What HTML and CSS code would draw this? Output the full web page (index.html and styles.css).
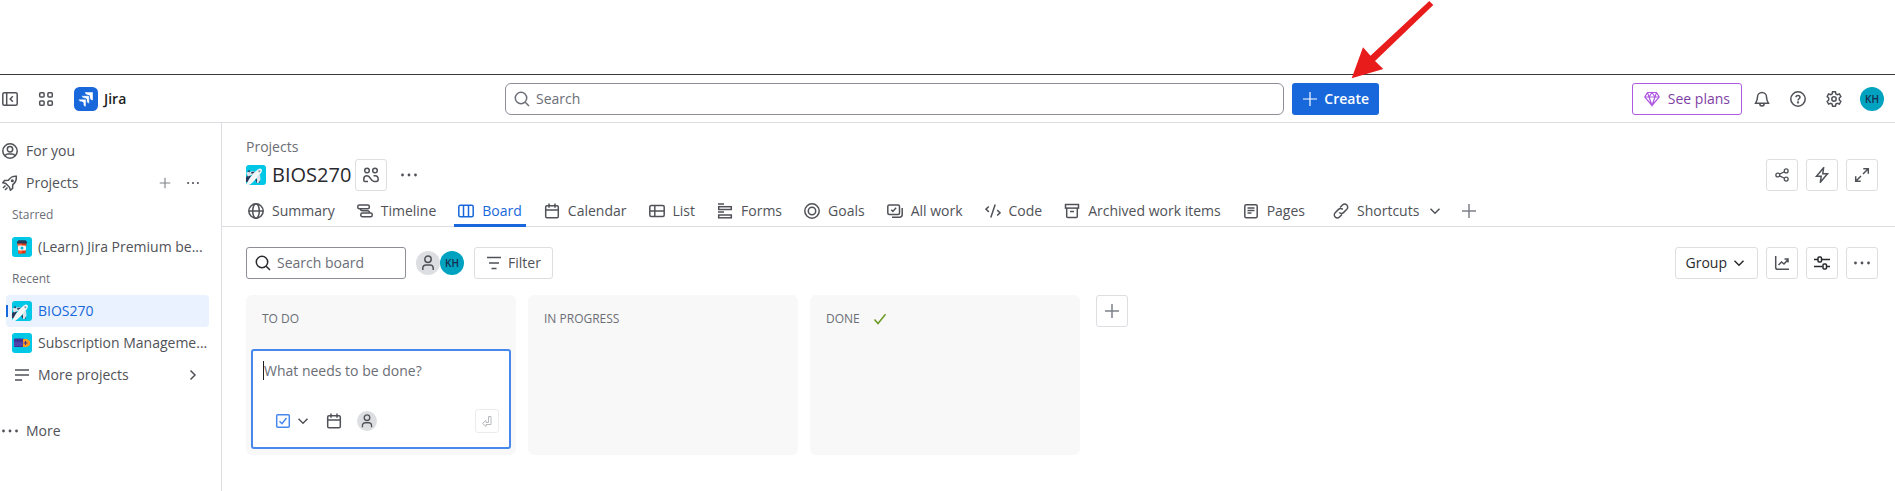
FILE: index.html
```html
<!DOCTYPE html>
<html lang="en">
<head>
<meta charset="utf-8">
<title>BIOS270 - Board - Jira</title>
<link rel="stylesheet" href="styles.css">
</head>
<body>
<svg class="sprite" aria-hidden="true">
  <symbol id="i-plus" viewBox="0 0 16 16"><path d="M8 1v14M1 8h14"/></symbol>
  <symbol id="i-dots" viewBox="0 0 16 16"><g fill="currentColor" stroke="none"><circle cx="1.5" cy="8" r="1.4"/><circle cx="8" cy="8" r="1.4"/><circle cx="14.5" cy="8" r="1.4"/></g></symbol>
  <symbol id="i-search" viewBox="0 0 16 16"><circle cx="7" cy="7" r="5.7"/><path d="M11.2 11.2L15 15"/></symbol>
  <symbol id="i-down" viewBox="0 0 16 16"><path d="M3.5 5.8L8 10.3l4.500-4.500"/></symbol>
  <symbol id="i-right" viewBox="0 0 16 16"><path d="M5.500 3.500L10 8l-4.500 4.500"/></symbol>
  <symbol id="i-person" viewBox="0 0 16 16"><circle cx="8" cy="4.200" r="3.200"/><path d="M2.800 15v-2a3 3 0 0 1 3-3h4.400a3 3 0 0 1 3 3v2"/></symbol>
  <symbol id="i-calendar" viewBox="0 0 16 16"><rect x="1.700" y="2.700" width="12.600" height="12.100" rx="1.300"/><path d="M1.700 7h12.600M5 .5v4.200M11 .5v4.200"/></symbol>
  <symbol id="i-lines" viewBox="0 0 16 16"><path d="M1 3h14M1 8h14M1 13h7"/></symbol>
  <symbol id="i-plane" viewBox="0 0 20 20">
    <rect width="20" height="20" rx="3" fill="#00c7e6" stroke="none"/>
    <g stroke="none"><path fill="#253858" d="M0 12l3-2 2 1-3 6H0zM9 14.500l4-.5 1 3.500-3 .5z"/><path fill="#dfe1e6" d="M0 7.500l8-1.500 1 2.500-7 3zM11 12.500l3-3 .5 5-2 3.500h-1.500z"/><path fill="#f4f5f7" d="M.5 20c.5-4 9-15.500 13.500-16.500 2.500 0 2.500 3 .5 5C11.500 12.500 7 17.500 3 20z"/><path fill="#8993a4" d="M12.500 5.200l2 .3-.5 2-1.800-1z"/><path fill="#253858" d="M1.500 6l2.500-1-.5 2.500zM5 7.300l3-.8.300 1-2.500 1.500z"/></g>
  </symbol>
</svg>

<header class="topbar">
  <div class="topbar-start">
    <button class="icon-button" aria-label="Collapse sidebar"><svg class="icon" viewBox="0 0 16 16"><rect x=".8" y="1.800" width="14.400" height="12.400" rx="1.500"/><path d="M4.700 2v12M10.800 5.300L8.200 8l2.600 2.700"/></svg></button>
    <button class="icon-button" aria-label="App switcher"><svg class="icon" viewBox="0 0 16 16"><rect x="1.700" y="1.700" width="4.400" height="4.400" rx="1"/><rect x="9.900" y="1.700" width="4.400" height="4.400" rx="1"/><rect x="1.700" y="9.900" width="4.400" height="4.400" rx="1"/><rect x="9.900" y="9.900" width="4.400" height="4.400" rx="1"/></svg></button>
    <a class="brand" href="#"><svg class="logo" viewBox="0 0 24 24"><rect width="24" height="24" rx="5.500" fill="#1868db"/><g fill="#fff"><path d="M10.800 5.200h8v8c-1.700 0-2.800-1.200-2.800-2.800V8.900l-1.300-.9c-2 0-3.400-1-3.900-2.800z"/><path d="M7.600 8.700h7.700v7.700c-1.600 0-2.700-1.200-2.700-2.700v-1.600l-1.400-.8c-2 0-3.200-1-3.600-2.600z" stroke="#1868db" stroke-width=".5"/><path d="M4.400 12.200h7.600v7.600c-1.600 0-2.700-1.200-2.700-2.700v-1.500L8 14.800c-2 0-3.200-1-3.600-2.600z" stroke="#1868db" stroke-width=".5"/></g></svg>Jira</a>
  </div>
  <div class="topbar-center">
    <label class="search search-global"><svg class="icon"><use href="#i-search"/></svg><input type="search" placeholder="Search" aria-label="Search"></label>
    <div class="create-wrap">
      <button class="create"><svg class="icon"><use href="#i-plus"/></svg>Create</button>
      <svg class="pointer" viewBox="0 0 84 79" aria-hidden="true"><path fill="#e91c1c" d="M.7 78.300L12 47.300l7.500 8.500L78.300 1l4 4-58.300 56 8.300 8z"/></svg>
    </div>
  </div>
  <div class="topbar-end">
    <button class="plans"><svg class="icon" viewBox="0 0 16 16"><path d="M3.500 1.500h9L15.300 6 8 14.500.7 6zM.7 6h14.600M5 6l3 8.500L11 6M3.500 1.500L5 6l3-4.500L11 6l1.500-4.500"/></svg>See plans</button>
    <button class="icon-button" aria-label="Notifications"><svg class="icon" viewBox="0 0 16 16"><path d="M3.500 6a4.500 4.500 0 0 1 9 0c0 3 .6 4 1.900 6.200H1.600C2.900 10 3.500 9 3.500 6zM5.800 12.500c0 3.400 4.400 3.400 4.400 0"/></svg></button>
    <button class="icon-button" aria-label="Help"><svg class="icon" viewBox="0 0 16 16"><circle cx="8" cy="8" r="7.200"/><path d="M6 6.300c0-2.500 4-2.400 4 0 0 1.400-2 1.500-2 3.100"/><circle cx="8" cy="11.500" r=".4" fill="currentColor"/></svg></button>
    <button class="icon-button" aria-label="Settings"><svg class="icon" viewBox="0 0 16 16"><path d="M6.600.8h2.800l.5 2.100 1.400.8 2.100-.7 1.400 2.500L13.300 7v2l1.500 1.500-1.400 2.500-2.100-.7-1.400.8-.5 2.100H6.600l-.5-2.100-1.400-.8-2.100.7-1.400-2.500L2.700 9V7L1.200 5.500 2.600 3l2.100.7 1.400-.8z"/><circle cx="8" cy="8" r="2.200"/></svg></button>
    <button class="avatar" aria-label="Profile">KH</button>
  </div>
</header>

<div class="layout">
  <nav class="sidebar">
    <a class="nav-item" href="#"><svg class="icon" viewBox="0 0 16 16"><circle cx="8" cy="8" r="7.200"/><circle cx="8" cy="6.300" r="2.700"/><path d="M3.200 13c.3-1.500 1.200-2 2.400-2h4.800c1.200 0 2.100.5 2.400 2"/></svg><span class="nav-text">For you</span></a>
    <div class="nav-item">
      <svg class="icon" viewBox="0 0 16 16"><path d="M14.300 1.200c-4-.3-5.500.8-8 4L2.600 5.500.8 7.600l2.900.9 3.800 3.800.9 2.900 2.200-1.900.2-3.600c3.200-2.500 3.900-4.300 3.500-8.500zM3.500 10.500L1 13M5.500 12.500L3 15"/><circle cx="10.300" cy="5.700" r=".8"/></svg>
      <a class="nav-text" href="#">Projects</a>
      <span class="nav-actions"><button class="bare" aria-label="Create project"><svg class="icon icon-12 soft"><use href="#i-plus"/></svg></button><button class="bare" aria-label="More actions"><svg class="icon icon-12"><use href="#i-dots"/></svg></button></span>
    </div>
    <h2 class="nav-heading">Starred</h2>
    <a class="nav-item nested" href="#"><svg class="tile" viewBox="0 0 20 20"><rect width="20" height="20" rx="3" fill="#00c7e6"/><path fill="#de350b" d="M5.500 6h9l-1 10.500h-7z"/><path fill="#ff5630" d="M5.500 6h4.500v10.500H6.500z"/><path fill="#253858" d="M6.500 3.200h7L15 5v1.500H5V5z"/><rect x="6" y="8.500" width="8" height="5" rx="1" fill="#f4f5f7"/><circle cx="10" cy="11" r="1.500" fill="#00b8d9"/></svg><span class="nav-text">(Learn) Jira Premium be...</span></a>
    <h2 class="nav-heading">Recent</h2>
    <a class="nav-item nested selected" href="#" aria-current="page"><svg class="tile"><use href="#i-plane"/></svg><span class="nav-text">BIOS270</span></a>
    <a class="nav-item nested" href="#"><svg class="tile" viewBox="0 0 20 20"><rect width="20" height="20" rx="3" fill="#00c7e6"/><rect x="2" y="5.500" width="10" height="8.500" rx="1" fill="#403294"/><path fill="#5243aa" d="M2 9h9v4H2z"/><path fill="#ff991f" d="M11 6h4l3 2v4l-3 2h-4z"/><path d="M13.500 8v4M11.500 10h4" stroke="#403294"/></svg><span class="nav-text">Subscription Manageme...</span></a>
    <a class="nav-item nested" href="#"><svg class="icon inset"><use href="#i-lines"/></svg><span class="nav-text">More projects</span><svg class="icon chevron"><use href="#i-right"/></svg></a>
    <a class="nav-item nav-more" href="#"><svg class="icon"><use href="#i-dots"/></svg><span class="nav-text">More</span></a>
  </nav>

  <main class="main">
    <div class="project-head">
      <a class="crumb" href="#">Projects</a>
      <div class="title-row">
        <svg class="tile"><use href="#i-plane"/></svg>
        <h1 class="title">BIOS270</h1>
        <button class="box" aria-label="Team"><svg class="icon" viewBox="0 0 16 16"><circle cx="4" cy="3.500" r="2.300"/><circle cx="12" cy="3.500" r="2.300"/><path d="M5 14.500H1.800c-.7 0-1-.3-1-1V12c0-2 1.200-3.200 3.200-3.200 4 0 3.200 5.700 7 5.700h2.200c1.400 0 2-.8 2-2.200 0-2.300-1.200-3.500-3.200-3.500h-1.500"/></svg></button>
        <button class="bare dots" aria-label="More actions"><svg class="icon"><use href="#i-dots"/></svg></button>
        <div class="title-actions">
          <button class="box" aria-label="Share"><svg class="icon icon-14" viewBox="0 0 16 16"><circle cx="3.200" cy="8" r="2.200"/><circle cx="12.800" cy="3.300" r="2.200"/><circle cx="12.800" cy="12.700" r="2.200"/><path d="M5.200 7l5.600-2.700M5.200 9l5.600 2.700"/></svg></button>
          <button class="box" aria-label="Automation"><svg class="icon" viewBox="0 0 16 16"><path d="M9.600.8L2.500 9.300H7.200L6.400 15.200l7.100-8.500H8.800z"/></svg></button>
          <button class="box" aria-label="Full screen"><svg class="icon" viewBox="0 0 16 16"><path d="M9.300 1.700h5v5M14 2L9 7M6.700 14.300h-5v-5M2 14l5-5"/></svg></button>
        </div>
      </div>
    </div>

    <nav class="tabs">
      <a class="tab" href="#"><svg class="icon" viewBox="0 0 16 16"><circle cx="8" cy="8" r="7.200"/><ellipse cx="8" cy="8" rx="3.300" ry="7.200"/><path d="M.8 8h14.400"/></svg>Summary</a>
      <a class="tab" href="#"><svg class="icon" viewBox="0 0 16 16"><rect x=".8" y="2" width="11.500" height="3.800" rx="1.500"/><rect x="3.800" y="9.900" width="11.400" height="3.800" rx="1.500"/><path d="M3.500 5.800c0 1.500.5 2 2 2h4.800c1.500 0 2.200.5 2.200 2"/></svg>Timeline</a>
      <a class="tab active" href="#" aria-current="page"><svg class="icon" viewBox="0 0 16 16"><rect x=".8" y="2.300" width="14.400" height="11.400" rx="1.500"/><path d="M5.500 2.300v11.400M10.500 2.300v11.400"/></svg>Board</a>
      <a class="tab" href="#"><svg class="icon"><use href="#i-calendar"/></svg>Calendar</a>
      <a class="tab" href="#"><svg class="icon" viewBox="0 0 16 16"><rect x=".8" y="2.500" width="14.400" height="11" rx="1.500"/><path d="M.8 8h14.400M5.800 2.500v11"/></svg>List</a>
      <a class="tab" href="#"><svg class="icon" viewBox="0 0 16 16"><path d="M1 1h6M1 9h6"/><rect x="1.700" y="3.700" width="12.600" height="2.800"/><rect x="1.700" y="12" width="12.600" height="2.800"/></svg>Forms</a>
      <a class="tab" href="#"><svg class="icon" viewBox="0 0 16 16"><circle cx="8" cy="8" r="7.200"/><circle cx="8" cy="8" r="3.700"/></svg>Goals</a>
      <a class="tab" href="#"><svg class="icon" viewBox="0 0 16 16"><rect x=".8" y="2" width="11.700" height="9.400" rx="1.500"/><path d="M4.200 6.700l1.700 1.700 3.200-3.700M15.200 5v6.500c0 1.700-1 2.700-2.700 2.700H5"/></svg>All work</a>
      <a class="tab" href="#"><svg class="icon" viewBox="0 0 16 16"><path d="M3.800 3.500L1 6.200l2.800 2.700M12.200 7.100L15 9.800l-2.800 2.700M10.200 1.500l-4.400 13"/></svg>Code</a>
      <a class="tab" href="#"><svg class="icon" viewBox="0 0 16 16"><rect x="1.500" y="1.500" width="13" height="3.600"/><path d="M2.700 5.100v8.400c0 .7.300 1 1 1h8.600c.7 0 1-.3 1-1V5.100M6 8.500h4"/></svg>Archived work items</a>
      <a class="tab" href="#"><svg class="icon" viewBox="0 0 16 16"><rect x="1.800" y="1.800" width="12.400" height="12.900" rx="1.500"/><path d="M4.500 5h7M4.500 7.500h7M4.500 10h4"/></svg>Pages</a>
      <button class="tab tab-menu"><svg class="icon" viewBox="0 0 16 16"><path d="M7 4.500l2.500-2.500a3 3 0 0 1 4.300 4.300L10.500 9.600a3 3 0 0 1-4.300 0M9 11.500L6.500 14a3 3 0 0 1-4.300-4.300l3.300-3.300a3 3 0 0 1 4.300 0"/></svg>Shortcuts<svg class="icon"><use href="#i-down"/></svg></button>
      <button class="bare" aria-label="Add tab"><svg class="icon soft"><use href="#i-plus"/></svg></button>
    </nav>

    <div class="toolbar">
      <label class="search search-board"><svg class="icon"><use href="#i-search"/></svg><input type="search" placeholder="Search board" aria-label="Search board"></label>
      <div class="people">
        <button class="avatar unassigned" aria-label="Unassigned"><svg class="icon"><use href="#i-person"/></svg></button>
        <button class="avatar" aria-label="KH">KH</button>
      </div>
      <button class="box wide"><svg class="icon" viewBox="0 0 16 16"><path d="M1 2.500h14M3 8h10M5.500 13.500h5"/></svg>Filter</button>
      <div class="toolbar-end">
        <button class="box wide strong">Group<svg class="icon"><use href="#i-down"/></svg></button>
        <button class="box" aria-label="Insights"><svg class="icon" viewBox="0 0 16 16"><path d="M1.700 1v11.500c0 1.200.6 1.800 1.800 1.800H15M4.500 10l3-3 2.500 2 4-4.500M10.500 4H14v3.500"/></svg></button>
        <button class="box strong" aria-label="View settings"><svg class="icon" viewBox="0 0 16 16"><path d="M0 4.500h4M8 4.500h8M0 11.500h8.500M12.500 11.500H16"/><rect x="4" y="2" width="3.500" height="5" rx="1"/><rect x="9" y="9" width="3.500" height="5" rx="1"/></svg></button>
        <button class="box" aria-label="More actions"><svg class="icon"><use href="#i-dots"/></svg></button>
      </div>
    </div>

    <div class="board">
      <section class="column">
        <h2 class="column-title">TO DO</h2>
        <form class="card">
          <div class="card-field"><span class="caret"></span><textarea rows="1" placeholder="What needs to be done?" aria-label="What needs to be done?"></textarea></div>
          <div class="card-tools">
            <button type="button" class="bare type" aria-label="Work type"><svg class="icon blue" viewBox="0 0 16 16"><rect x="1.700" y="1.700" width="12.600" height="12.600" rx="1"/><path d="M4.500 8.200L7 10.700 11.500 5"/></svg><svg class="icon"><use href="#i-down"/></svg></button>
            <button type="button" class="bare" aria-label="Due date"><svg class="icon"><use href="#i-calendar"/></svg></button>
            <button type="button" class="avatar small unassigned" aria-label="Assignee"><svg class="icon icon-14"><use href="#i-person"/></svg></button>
            <button class="enter" disabled aria-label="Create"><svg class="icon" viewBox="0 0 16 16"><path d="M9.500 3.500h2.500v8H7v2L3.500 10.300 7 7.500v2h2.500z" stroke-width="1"/></svg></button>
          </div>
        </form>
      </section>
      <section class="column"><h2 class="column-title">IN PROGRESS</h2></section>
      <section class="column"><h2 class="column-title">DONE <svg class="icon green" viewBox="0 0 16 16"><path d="M2.500 8.500l3.500 4L13.500 3.300"/></svg></h2></section>
      <button class="box add-column" aria-label="Create column"><svg class="icon soft"><use href="#i-plus"/></svg></button>
    </div>
  </main>
</div>
</body>
</html>
```

FILE: styles.css
```css
* { box-sizing: border-box; }

body {
  margin: 0;
  min-height: 100vh;
  display: flex;
  flex-direction: column;
  padding-top: 74px;
  background: #fff;
  color: #505258;
  font: 500 14px/20px "Open Sans", "Noto Sans", sans-serif;
}

a { color: inherit; text-decoration: none; }
h1, h2 { margin: 0; }

button {
  font: inherit;
  color: inherit;
  padding: 0;
  border: 0;
  background: none;
}

input, textarea {
  font: inherit;
  font-weight: 400;
  color: #292a2e;
  border: 0;
  padding: 0;
  outline: 0;
  background: none;
  min-width: 0;
  flex: 1;
}

input::placeholder, textarea::placeholder { color: #6b6e76; opacity: 1; }

.sprite { position: absolute; width: 0; height: 0; }

.icon {
  width: 16px;
  height: 16px;
  flex: none;
  fill: none;
  stroke: currentColor;
  stroke-width: 1.5;
}
.icon-14 { width: 14px; height: 14px; }
.icon-12 { width: 12px; height: 12px; }
.soft { color: #7d818a; }
.blue { color: #4688ec; }
.green { color: #6a9a23; }
.tile { width: 20px; height: 20px; flex: none; }

/* Top bar */
.topbar {
  display: grid;
  grid-template-columns: 1fr minmax(0, 874px) 1fr;
  align-items: center;
  height: 49px;
  padding-right: 11px;
  border-top: 1px solid #3b3b3d;
  border-bottom: 1px solid #dddee1;
}
.topbar-start, .topbar-center, .topbar-end { display: flex; align-items: center; }
.topbar-start { gap: 20px; padding-left: 2px; }
.topbar-center { gap: 8px; }
.topbar-end { justify-content: flex-end; gap: 20px; }
.icon-button { display: flex; }

.brand { display: flex; align-items: center; gap: 6px; color: #1e1f21; font-weight: 600; }
.logo { width: 24px; height: 24px; }

.search {
  display: flex;
  align-items: center;
  gap: 6px;
  height: 32px;
  padding: 0 8px;
  border: 1px solid #8c8f97;
  border-radius: 3px;
}
.search-global { flex: 1; border-radius: 6px; color: #6b6e76; }
.search-board { width: 160px; color: #292a2e; }

.create-wrap { position: relative; }
.create {
  display: flex;
  align-items: center;
  gap: 6px;
  height: 32px;
  padding: 0 10px;
  border-radius: 3px;
  background: #1868db;
  color: #fff;
  font-weight: 600;
}
.create .icon { stroke-width: 1.2; }
.pointer {
  position: absolute;
  right: -56px;
  bottom: 36px;
  width: 84px;
  height: 79px;
}

.plans {
  display: flex;
  align-items: center;
  gap: 8px;
  height: 32px;
  padding: 0 11px;
  margin-right: -8px;
  border: 1px solid #af59e1;
  border-radius: 3px;
  color: #803fa5;
}
.plans .icon { color: #af59e1; stroke-width: 1.2; }

.avatar {
  display: flex;
  align-items: center;
  justify-content: center;
  flex: none;
  width: 24px;
  height: 24px;
  border-radius: 50%;
  background: #00a3bf;
  color: #172b4d;
  font-size: 10px;
  font-weight: 600;
}
.unassigned { background: #dddee1; color: #505258; }
.small { width: 20px; height: 20px; }
.topbar-end .avatar { margin-left: -2px; }

/* Sidebar */
.layout { display: flex; flex: 1; }
.sidebar {
  flex: none;
  width: 222px;
  padding: 12px 12px 12px 0;
  border-right: 1px solid #dddee1;
}
.nav-item {
  display: flex;
  align-items: center;
  gap: 8px;
  height: 32px;
  padding-left: 2px;
}
.nav-text { flex: 1; white-space: nowrap; }
.nav-heading {
  padding-left: 12px;
  font-size: 12px;
  font-weight: 500;
  line-height: 32px;
  color: #6b6e76;
}
.nested { gap: 6px; margin-left: 6px; padding: 0 4px 0 6px; border-radius: 4px; }
.inset { margin: 0 2px; }
.chevron { margin-right: 4px; }
.nav-actions { display: flex; gap: 16px; margin-right: 10px; }
.bare { display: flex; align-items: center; }
.selected {
  background: linear-gradient(#1868db, #1868db) left center / 2px 12px no-repeat #e9f2fe;
  color: #1868db;
}
.nav-more { margin-top: 24px; }

/* Project header */
.main { flex: 1; min-width: 0; }
.project-head { padding: 14px 17px 0 24px; }
.crumb { display: block; font-weight: 400; color: #6b6e76; }
.title-row { display: flex; align-items: center; margin-top: 2px; }
.title { margin: 0 4px 0 6px; font-size: 20px; font-weight: 500; line-height: 32px; color: #292a2e; }
.dots { margin-left: 14px; }
.title-actions, .toolbar-end { display: flex; gap: 8px; margin-left: auto; }

.box {
  display: flex;
  align-items: center;
  justify-content: center;
  gap: 6px;
  flex: none;
  width: 32px;
  height: 32px;
  border: 1px solid #dddee1;
  border-radius: 3px;
}
.wide { width: auto; padding: 0 11px; }
.wide.strong { gap: 4px; padding: 0 10px; }
.strong { color: #292a2e; }

.tabs {
  display: flex;
  gap: 14px;
  height: 36px;
  padding-left: 22px;
  border-bottom: 1px solid #dddee1;
}
.tab {
  display: flex;
  align-items: center;
  gap: 8px;
  height: 36px;
  padding: 6px 4px 0;
  border-bottom: 3px solid transparent;
  white-space: nowrap;
}
.active { border-color: #1868db; color: #1868db; }
.tab-menu { padding: 6px 4px 0 10px; }
.tabs .bare { padding-top: 4px; }

/* Board */
.toolbar { display: flex; align-items: center; gap: 10px; padding: 20px 17px 16px 24px; }
.people { display: flex; }
.board { display: flex; align-items: flex-start; gap: 12px; padding-left: 24px; }
.column {
  flex: 0 1 270px;
  min-height: 160px;
  padding: 5px;
  border-radius: 6px;
  background: #f8f8f8;
}
.column-title {
  display: flex;
  align-items: center;
  gap: 12px;
  height: 38px;
  margin-bottom: 11px;
  padding: 0 11px;
  font-size: 12px;
  font-weight: 500;
  color: #6b6e76;
}
.add-column { margin-left: 4px; }

.card {
  height: 100px;
  padding: 10px;
  border: 2px solid #4688ec;
  border-radius: 3px;
  background: #fff;
}
.card-field { display: flex; height: 20px; }
.caret { width: 1px; height: 19px; background: #1e1f21; }
.card-field textarea { resize: none; height: 20px; overflow: hidden; }
.card-tools { display: flex; align-items: center; gap: 15px; margin-top: 28px; padding-left: 12px; }
.type { gap: 4px; }
.enter {
  display: flex;
  align-items: center;
  justify-content: center;
  width: 24px;
  height: 24px;
  margin-left: auto;
  border: 1px solid #ebecee;
  border-radius: 3px;
  color: #b7b9be;
}
```
